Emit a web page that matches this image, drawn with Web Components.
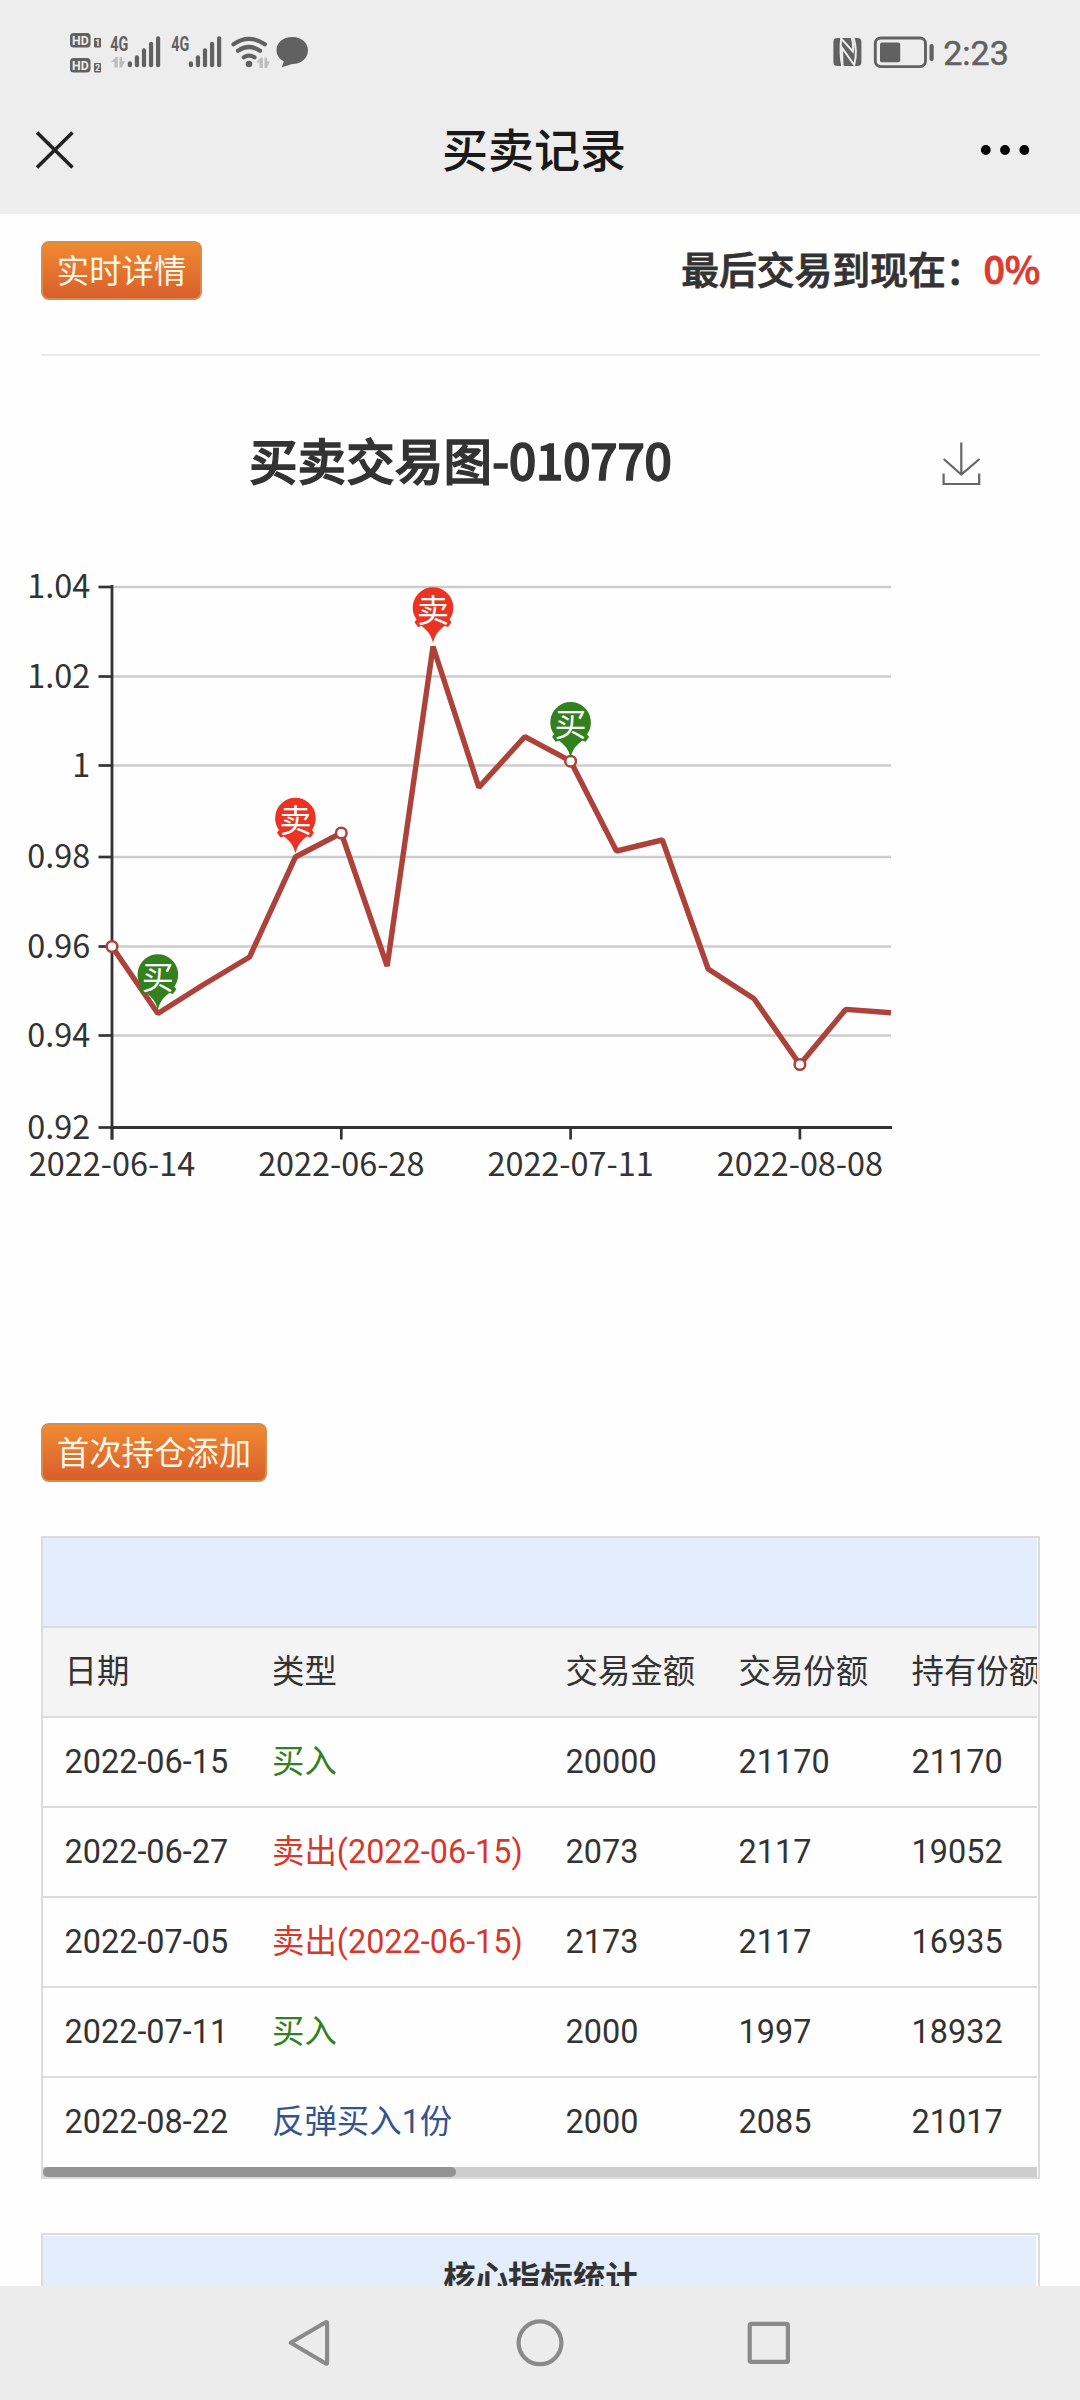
<!DOCTYPE html>
<html lang="zh-CN">
<head>
<meta charset="utf-8">
<title>买卖记录</title>
<style>
    body {
        margin: 0;
        width: 1080px;
        height: 2400px;
        overflow: hidden;
        background: #fefefe;
        color: #333;
        font-family: Roboto, "Noto Sans CJK SC", sans-serif;
        font-size: 32.4px;
    }
</style>
</head>
<body>
<app-screen>
    <status-bar slot="top" time="2:23"></status-bar>
    <title-bar slot="top">买卖记录</title-bar>

    <summary-row>
        <orange-button slot="action">实时详情</orange-button>
        <span slot="label">最后交易到现在：</span>
        <span slot="value">0%</span>
    </summary-row>
    <trade-chart heading="买卖交易图" code="-010770"></trade-chart>
    <orange-button>首次持仓添加</orange-button>
    <trade-table></trade-table>
    <stat-panel>核心指标统计</stat-panel>

    <nav-bar slot="bottom"></nav-bar>
</app-screen>

<script>
class AppScreen extends HTMLElement {
    constructor() {
        super();
        this.attachShadow({mode: "open"}).innerHTML = `
        <style>
            :host {
                display: flex;
                flex-direction: column;
                height: 2400px;
            }

            main {
                flex: 1;
                min-height: 0;
                overflow: hidden;
                box-sizing: border-box;
                padding: 27px 40px 0 41px;
            }
        </style>
        <slot name="top"></slot>
        <main><slot></slot></main>
        <slot name="bottom"></slot>
        `;
    }
}

class StatusBar extends HTMLElement {
    connectedCallback() {
        // five signal bars, growing to the right
        const bars = (x) => [6, 12, 19, 25.5, 31].map((h, i) =>
            `<rect x="${x + i * 7.05}" y="${67.3 - h}" width="4.2" height="${h}" rx="2"/>`).join("");
        const arrows = (x, y) => `
            <path fill="#bdbdbd" d="M${x} ${y + 4.5}l5-5h1.8v10.5h-3.3v-5.5zM${x + 8.5} ${y - .5}h2.2l.6 4h2.7l-3.2 6.5h-2.3z"/>`;
        const hd = (y, n) => `
            <rect x="70" y="${y}" width="20.5" height="14.5" rx="3.5"/>
            <text x="72" y="${y + 12}" font-size="13.5" font-weight="700" fill="#ededed" textLength="16.6" lengthAdjust="spacingAndGlyphs">HD</text>
            <rect x="94" y="${y + 5}" width="7" height="9.5" rx="1"/>
            <text x="95" y="${y + 13.2}" font-size="9" font-weight="700" fill="#ededed">${n}</text>`;

        this.attachShadow({mode: "open"}).innerHTML = `
        <style>
            :host {
                display: block;
                height: 100px;
                background: #ededed;
            }

            svg {
                display: block;
            }
        </style>
        <svg width="1080" height="100" fill="#616161" font-family="Roboto, sans-serif">
            ${hd(33, 1)}
            ${hd(58, 2)}
            <text x="110.3" y="50.7" font-size="19.5" font-weight="700" textLength="18" lengthAdjust="spacingAndGlyphs">4G</text>
            ${arrows(111, 57.5)}
            ${bars(127.8)}
            <text x="171.3" y="50.7" font-size="19.5" font-weight="700" textLength="18" lengthAdjust="spacingAndGlyphs">4G</text>
            ${bars(188.8)}
            <g fill="none" stroke="#616161" stroke-width="4.2" stroke-linecap="round">
                <path d="M233.5 44.2Q249 33.5 264.8 44.2M238 50.8Q249 43.2 260 50.8M243.9 57.3Q249 53.9 254.5 57.3"/>
            </g>
            <circle cx="249" cy="64" r="3.3"/>
            ${arrows(256, 58)}
            <path d="M292.2 37C283 37 276.5 42.8 276.5 50.3C276.5 55 279 58.8 283.8 61.4L281.8 67.2L292.4 64.1C301.5 63.8 308 58.2 308 50.3C308 42.8 301.4 37 292.2 37Z"/>
            <!-- nfc badge: plate with two hooked strokes cut out -->
            <rect x="833.4" y="38" width="28" height="28" rx="4"/>
            <path fill="none" stroke="#ededed" stroke-width="2" d="M842.6 66.5C840.4 60 840 47 841.2 38.5L852.8 51.5C853.4 47 853 41.5 851.6 37.5"/>
            <path fill="none" stroke="#ededed" stroke-width="2" d="M842.6 66.5C842.3 60 842 53 842.2 48L854.2 65C856.3 57 856.2 46 853.6 37.5"/>
            <rect x="875.3" y="38" width="50.2" height="28.6" rx="5.5" fill="none" stroke="#616161" stroke-width="2.9"/>
            <rect x="880" y="42.5" width="20.2" height="19.8" rx="2"/>
            <rect x="929.5" y="44" width="4.2" height="17" rx="2"/>
            <text x="943.2" y="65" font-size="34" stroke="#616161" stroke-width=".5">${this.getAttribute("time")}</text>
        </svg>
        `;
    }
}

class TitleBar extends HTMLElement {
    constructor() {
        super();
        this.attachShadow({mode: "open"}).innerHTML = `
        <style>
            :host {
                display: grid;
                grid-template-columns: 1fr auto 1fr;
                align-items: center;
                box-sizing: border-box;
                height: 114px;
                padding: 0 50px 14px 35px;
                background: #ededed;
                color: #191919;
            }

            h1 {
                margin: 0;
                padding: 2px 0 0 3px;
                font-size: 46px;
                font-weight: 500;
                line-height: 66px;
            }

            svg {
                display: block;
            }

            .more {
                justify-self: end;
            }
        </style>
        <svg width="40" height="40" fill="none" stroke="#222" stroke-width="3.6"><path d="M2 2.5L37.5 37.5M37.5 2.5L2 37.5"/></svg>
        <h1><slot></slot></h1>
        <svg class="more" width="50" height="12"><circle cx="5.8" cy="6" r="4.9"/><circle cx="25" cy="6" r="4.9"/><circle cx="44.3" cy="6" r="4.9"/></svg>
        `;
    }
}

class OrangeButton extends HTMLElement {
    constructor() {
        super();
        this.attachShadow({mode: "open"}).innerHTML = `
        <style>
            :host {
                display: block;
                box-sizing: border-box;
                width: max-content;
                height: 59px;
                padding: 0 13.8px;
                border: 2px solid #d98b48;
                border-radius: 8px;
                background: linear-gradient(#f08a32, #d95e2c);
                color: #fef6e8;
                line-height: 58px;
            }
        </style>
        <slot></slot>
        `;
    }
}

class SummaryRow extends HTMLElement {
    constructor() {
        super();
        this.attachShadow({mode: "open"}).innerHTML = `
        <style>
            :host {
                display: flex;
                justify-content: space-between;
                height: 113px;
                border-bottom: 2px solid #ebebeb;
            }

            .result {
                font-family: "Noto Sans CJK SC", sans-serif;
                font-size: 37.8px;
                font-weight: 500;
                line-height: 54px;
                -webkit-text-stroke: 0.9px;
            }

            .value {
                color: #dd3a2d;
                letter-spacing: -0.3px;
            }
        </style>
        <slot name="action"></slot>
        <div class="result"><slot name="label"></slot><span class="value"><slot name="value"></slot></span></div>
        `;
    }
}

class TradeChart extends HTMLElement {
    connectedCallback() {
        const left = 112, right = 891, step = 45.86;
        // plot coordinates of the net value line
        const ys = [946.5, 1013.5, 984.5, 957, 857, 833, 966, 646.5, 787.4, 736.7, 761.2, 851, 840, 969, 998.8, 1064.5, 1009.4, 1012.8];
        const ticks = [["1.04", 587], ["1.02", 676.5], ["1", 765.5], ["0.98", 857], ["0.96", 946.5], ["0.94", 1035.5], ["0.92", 1127.5]];
        const dates = ["2022-06-14", "2022-06-28", "2022-07-11", "2022-08-08"];
        const marks = [[1, "买"], [4, "卖"], [7, "卖"], [10, "买"]];
        const px = (i) => left + step * i;

        const grid = ticks.map(([label, y], i) => `
            ${i < 6 ? `<path d="M${left} ${y}H${right}" stroke="#ccc" stroke-width="2.6"/>` : ""}
            <path d="M98.5 ${y}H${left}" stroke="#333" stroke-width="2.7"/>
            <text x="90.3" y="${y + 11}" text-anchor="end">${label}</text>`).join("");

        const xAxis = dates.map((label, i) => `
            <path d="M${px(i * 5)} 1127.5V1139.5" stroke="#333" stroke-width="2.7"/>
            <text x="${px(i * 5)}" y="1176" text-anchor="middle">${label}</text>`).join("");

        const pins = marks.map(([i, label]) => `
            <g transform="translate(${px(i)} ${ys[i]})" fill="${label === "买" ? "#33801f" : "#ea3323"}">
                <path d="M-16.5 -27A20.3 20.3 0 1 1 16.5 -27L18.5 -24.3L15 -19.5L11.5 -20.5C6 -16.5 2 -12 0 -3.5C-2 -12 -6 -16.5 -11.5 -20.5L-15 -19.5L-18.5 -24.3Z"/>
                <text y="-24.8" font-size="32" fill="#fff" text-anchor="middle">${label}</text>
            </g>`).join("");

        const dots = [0, 5, 10, 15].map((i) =>
            `<circle cx="${px(i)}" cy="${ys[i]}" r="5.3" fill="#fff" stroke="#ad423b" stroke-width="2.5"/>`).join("");

        this.attachShadow({mode: "open"}).innerHTML = `
        <style>
            :host {
                display: block;
                height: 1067px;
                font-family: "Noto Sans CJK SC", sans-serif;
            }

            header {
                display: flex;
                justify-content: space-between;
                align-items: center;
                height: 70px;
                padding: 70px 58px 0 208px;
            }

            h2 {
                margin: -4px 0 0;
                font-size: 48.6px;
                font-weight: 500;
                line-height: 70px;
                -webkit-text-stroke: 1.3px;
            }

            h2 span {
                letter-spacing: -0.6px;
            }

            svg {
                display: block;
            }

            header svg {
                margin-top: 2px;
            }

            .plot {
                margin: 64px 0 0 -41px;
            }
        </style>
        <header>
            <h2>${this.getAttribute("heading")}<span>${this.getAttribute("code")}</span></h2>
            <svg width="42" height="46" fill="none" stroke="#666" stroke-width="2.2"><path d="M21.3 3.5V36M3.7 20L21.3 35.5L39.5 20M3.6 34.5V45H39.2V34.5"/></svg>
        </header>
        <svg class="plot" width="1040" height="640" viewBox="0 560 1040 640" font-size="32.4" fill="#333">
            ${grid}
            <path d="M${left} 585V1139.5" stroke="#333" stroke-width="2.8"/>
            <path d="M${left} 1127.5H892" stroke="#333" stroke-width="2.8"/>
            ${xAxis}
            <polyline points="${ys.map((y, i) => Math.min(px(i), right) + "," + y).join(" ")}" fill="none" stroke="#ad423b" stroke-width="5.4" stroke-linejoin="bevel"/>
            ${dots}
            ${pins}
        </svg>
        `;
    }
}

class TradeTable extends HTMLElement {
    connectedCallback() {
        const rows = [
            ["2022-06-15", "买入", "20000", "21170", "21170", "buy"],
            ["2022-06-27", "卖出(2022-06-15)", "2073", "2117", "19052", "sell"],
            ["2022-07-05", "卖出(2022-06-15)", "2173", "2117", "16935", "sell"],
            ["2022-07-11", "买入", "2000", "1997", "18932", "buy"],
            ["2022-08-22", "反弹买入1份", "2000", "2085", "21017", "rebound"]
        ];

        this.attachShadow({mode: "open"}).innerHTML = `
        <style>
            :host {
                display: block;
                box-sizing: border-box;
                width: 999px;
                height: 643px;
                margin-top: 54px;
                padding-right: 1px;
                border: 2px solid #dcdcde;
            }

            .row {
                display: grid;
                grid-template-columns: 207.5px 293.5px 173px 173px 126px;
                box-sizing: border-box;
                height: 90px;
                padding-left: 21.6px;
                border-bottom: 2px solid #dcdcde;
                line-height: 88px;
                white-space: nowrap;
                overflow: hidden;
            }

            .row:last-of-type {
                height: 89px;
                border-bottom: 0;
            }

            .caption {
                background: #e3edfc;
            }

            .head {
                background: #f4f4f4;
            }

            .buy { color: #33801f; }
            .sell { color: #d6382c; }
            .rebound { color: #35548e; }

            footer {
                height: 10px;
                background: #cdcdcd;
            }

            footer i {
                display: block;
                width: 413px;
                height: 10px;
                border-radius: 5px;
                background: #939393;
            }
        </style>
        <div class="row caption"></div>
        <div class="row head"><span>日期</span><span>类型</span><span>交易金额</span><span>交易份额</span><span>持有份额</span></div>
        ${rows.map((r) => `<div class="row"><span>${r[0]}</span><span class="${r[5]}">${r[1]}</span><span>${r[2]}</span><span>${r[3]}</span><span>${r[4]}</span></div>`).join("")}
        <footer><i></i></footer>
        `;
    }
}

class StatPanel extends HTMLElement {
    constructor() {
        super();
        this.attachShadow({mode: "open"}).innerHTML = `
        <style>
            :host {
                display: block;
                box-sizing: border-box;
                width: 999px;
                margin-top: 54px;
                padding: 1px 2px 0 0;
                border: 2px solid #dcdcde;
            }

            h3 {
                margin: 0;
                height: 88px;
                padding-left: 2px;
                background: #e3edfc;
                font-size: 32.4px;
                font-weight: 700;
                line-height: 86px;
                text-align: center;
            }
        </style>
        <h3><slot></slot></h3>
        `;
    }
}

class NavBar extends HTMLElement {
    constructor() {
        super();
        this.attachShadow({mode: "open"}).innerHTML = `
        <style>
            :host {
                display: flex;
                justify-content: center;
                gap: 179px;
                height: 114px;
                background: #ececec;
            }

            svg {
                display: block;
                margin-top: 32px;
                fill: none;
                stroke: #8a8a8a;
                stroke-width: 4.2;
                stroke-linejoin: round;
            }
        </style>
        <svg width="50" height="50"><path d="M4.7 24.8L39.7 4.2Q41.1 3.6 41.1 5.4V44.4Q41.1 46.2 39.7 45.5Z"/></svg>
        <svg width="50" height="50"><circle cx="25" cy="24.8" r="21.4"/></svg>
        <svg width="50" height="50"><rect x="5.7" y="5.9" width="38.2" height="38" rx="1.5"/></svg>
        `;
    }
}

customElements.define("app-screen", AppScreen);
customElements.define("status-bar", StatusBar);
customElements.define("title-bar", TitleBar);
customElements.define("orange-button", OrangeButton);
customElements.define("summary-row", SummaryRow);
customElements.define("trade-chart", TradeChart);
customElements.define("trade-table", TradeTable);
customElements.define("stat-panel", StatPanel);
customElements.define("nav-bar", NavBar);
</script>
</body>
</html>
